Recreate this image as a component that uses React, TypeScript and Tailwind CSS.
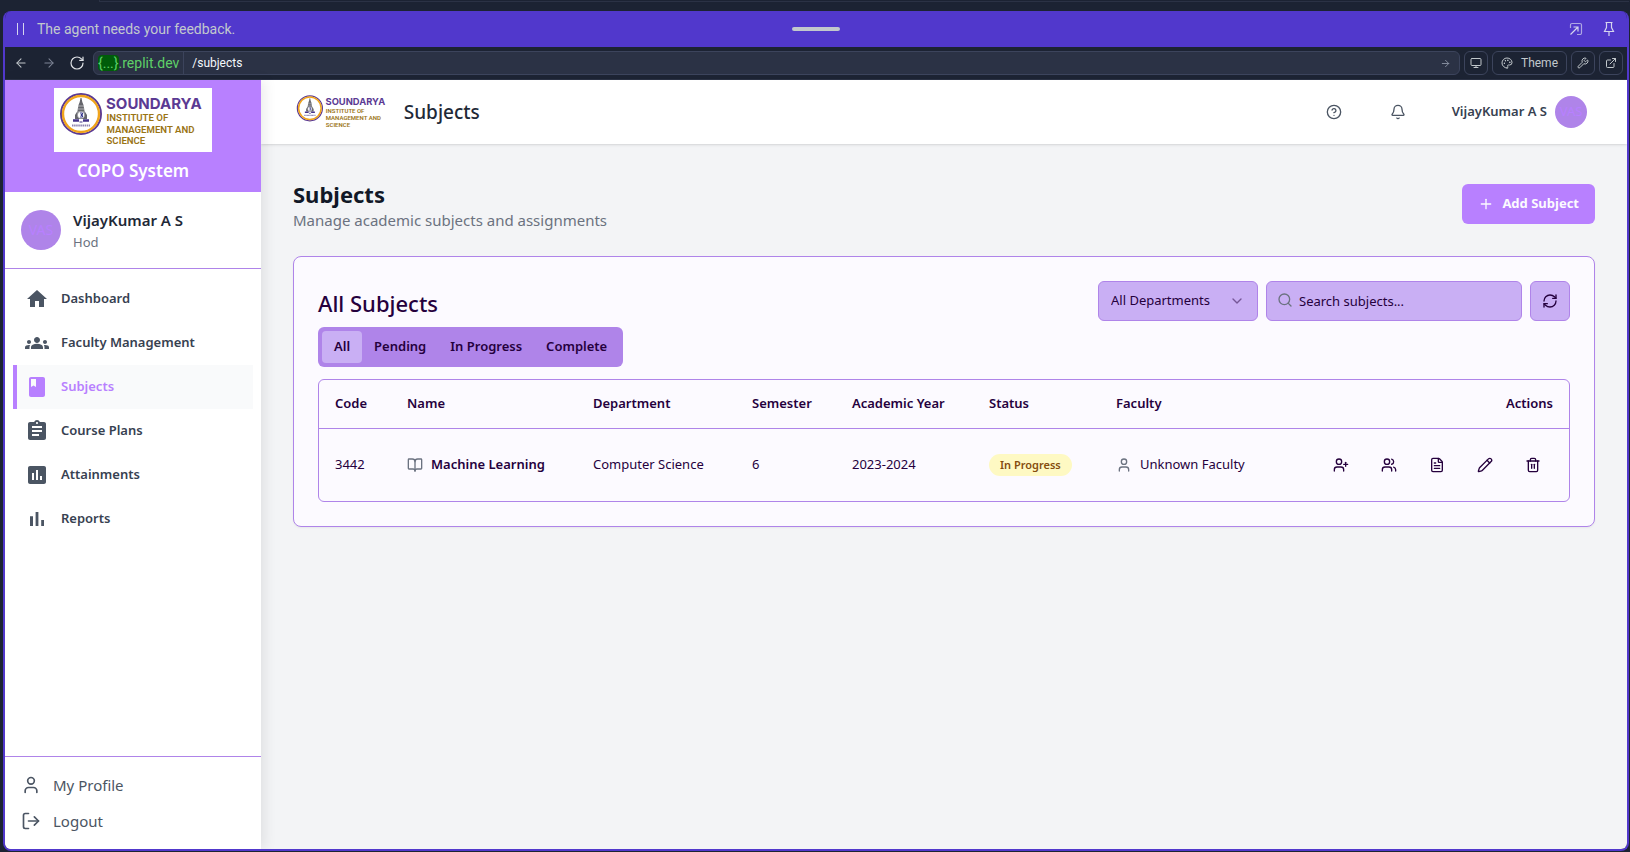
import React from "react";
import {
  ArrowLeft, ArrowRight, RotateCw, Monitor, Palette, Wrench, ExternalLink, CircleHelp, Bell, Plus,
  ChevronDown, Search, RefreshCw, BookOpen, User, UserPlus, Users, FileText, Pencil, Trash2, LogOut,
} from "lucide-react";
import { MdHome, MdGroups, MdBook, MdAssignment, MdAssessment } from "react-icons/md";

function Logo({ className }: { className: string }) {
  return (
    <svg viewBox="0 0 158 64" className={className} role="img" aria-label="Soundarya Institute of Management and Science">
      <rect width="158" height="64" fill="#fff" />
      <circle cx="27" cy="26" r="20" fill="#fff" stroke="#5b3a93" strokeWidth="2" />
      <circle cx="27" cy="26" r="18" fill="none" stroke="#f0a41c" strokeWidth="2.4" />
      <path d="M26.500 10h1l.8 4 1.200 3 1 6 2.500 4v4H21v-4l2.500-4 1-6 1.200-3z" fill="#66666c" />
      <path d="M24 18h6M23.500 21h7M23 24h8" stroke="#c9c9cc" strokeWidth=".8" />
      <circle cx="27" cy="27" r="3.600" fill="#fff" stroke="#8a8a90" strokeWidth=".6" />
      <path d="M26 25h2.500v1.500h-1.500v1h1.500V29H26" fill="none" stroke="#34348c" strokeWidth="1" />
      <path d="M19 32.500h6M29 32.500h6" stroke="#43328a" strokeWidth="2.400" />
      <path d="M25.500 34h3" stroke="#43328a" strokeWidth="1.200" />
      <path d="M18 37.500h18" stroke="#8d83b0" strokeWidth="2" strokeDasharray="1.500 .6" />
      <text x="52" y="21" fontSize="15" fill="#5b3a93" fontFamily="Inter, sans-serif" fontWeight="700">SOUNDARYA</text>
      <g fontFamily="Roboto, sans-serif" fontWeight="600" fontSize="9.600" fill="#9a7414">
        <text x="52.500" y="33">INSTITUTE OF</text>
        <text x="52.500" y="44.500">MANAGEMENT AND</text>
        <text x="52.500" y="56">SCIENCE</text>
      </g>
    </svg>
  );
}

function BarsIcon({ size, className }: { size: number; className?: string }) {
  return (
    <svg viewBox="0 0 24 24" width={size} height={size} fill="currentColor" className={className} aria-hidden="true">
      <path d="M5 9.200h3V19H5zM10.600 5h2.800v14h-2.800zM16.200 13H19v6h-2.800z" />
    </svg>
  );
}

const nav = [
  { label: "Dashboard", Icon: MdHome },
  { label: "Faculty Management", Icon: MdGroups },
  { label: "Subjects", Icon: MdBook, active: true },
  { label: "Course Plans", Icon: MdAssignment },
  { label: "Attainments", Icon: MdAssessment },
  { label: "Reports", Icon: BarsIcon },
];

const tabs = ["All", "Pending", "In Progress", "Complete"];

const columns = [
  { label: "Code", width: "w-[72px]" },
  { label: "Name", width: "w-[186px]" },
  { label: "Department", width: "w-[159px]" },
  { label: "Semester", width: "w-[100px]" },
  { label: "Academic Year", width: "w-[137px]" },
  { label: "Status", width: "w-[127px]" },
  { label: "Faculty", width: "w-[190px]" },
];

const actions = [
  { label: "Assign faculty", Icon: UserPlus },
  { label: "View students", Icon: Users },
  { label: "View syllabus", Icon: FileText },
  { label: "Edit subject", Icon: Pencil },
  { label: "Delete subject", Icon: Trash2 },
];

const toolButton = "flex h-6 items-center justify-center rounded-md border border-[#3c445c] text-[#c2c8cc]";

function BrowserChrome() {
  return (
    <>
      <div className="grid h-9 shrink-0 grid-cols-3 items-center bg-[#5138cc] px-3 font-['Roboto',sans-serif] text-[#c2c8cc]">
        <div className="flex items-center gap-2">
          <svg viewBox="0 0 12 14" className="h-3.5 w-3" fill="none" stroke="#d5d5ee" aria-hidden="true">
            <path d="M.5 1v12M6.500 1v12" />
          </svg>
          <span className="text-sm">The agent needs your feedback.</span>
        </div>
        <div className="h-1 w-12 justify-self-center rounded-full bg-[#c2c8cc]" />
        <div className="flex items-center justify-end gap-5">
          <button aria-label="Open in window">
            <svg viewBox="0 0 14 14" className="size-3.5" fill="none" stroke="#d5d5ee" strokeWidth="1.200" aria-hidden="true">
              <path d="M1.500 6V3a1.500 1.500 0 0 1 1.500-1.500h8A1.500 1.500 0 0 1 12.500 3v8a1.500 1.500 0 0 1-1.500 1.500H8" opacity=".7" />
              <path d="M1.500 12.500 9 5M4.500 5H9v4.500" />
            </svg>
          </button>
          <button aria-label="Pin">
            <svg viewBox="0 0 12 16" className="h-4 w-3" fill="none" stroke="#d5d5ee" strokeWidth="1.200" aria-hidden="true">
              <path d="M2.500 1.500h7M3.500 1.500v5l-2 4h9l-2-4v-5M6 10.500V15" />
            </svg>
          </button>
        </div>
      </div>
      <div className="flex h-[33px] shrink-0 items-center gap-1 border-b border-[#2b3245] bg-[#1c2333] px-1 font-['Roboto',sans-serif] text-[#c2c8cc]">
        <div className="flex items-center">
          <button aria-label="Back" className="grid h-6 w-6 place-items-center"><ArrowLeft size={14} strokeWidth={1.8} /></button>
          <button aria-label="Forward" className="grid h-6 w-8 place-items-center text-[#7f8697]"><ArrowRight size={14} strokeWidth={1.8} /></button>
          <button aria-label="Reload" className="grid h-6 w-6 place-items-center text-[#dfe2e6]"><RotateCw size={16} strokeWidth={1.8} /></button>
        </div>
        <div className="flex h-6 flex-1 items-center rounded-md border border-[#3c445c] bg-[#2b3245]">
          <div className="flex h-full items-center border-r border-[#3c445c] px-1 text-sm text-[#5fd068]">
            <span className="rounded bg-[#005c0a] leading-4">{"{...}"}</span>.replit.dev
          </div>
          <input aria-label="Path" defaultValue="/subjects" className="h-5 min-w-0 flex-1 bg-transparent px-2 text-xs text-[#f5f9fc] outline-none" />
          <button aria-label="Go" className="px-2 text-[#8b93a3]"><ArrowRight size={11} /></button>
        </div>
        <button aria-label="Device size" className={`${toolButton} w-6`}><Monitor size={12} /></button>
        <button className={`${toolButton} gap-2 px-2 text-xs`}>
          <Palette size={12} />Theme
        </button>
        <button aria-label="Developer tools" className={`${toolButton} w-6`}><Wrench size={12} /></button>
        <button aria-label="Open in new tab" className={`${toolButton} w-6`}><ExternalLink size={12} /></button>
      </div>
    </>
  );
}

function Sidebar() {
  return (
    <aside className="z-10 flex w-64 shrink-0 flex-col bg-white shadow-[4px_0_12px_rgba(0,0,0,0.08)]">
      <div className="flex h-28 flex-col items-center bg-[#b880ff] pt-2">
        <Logo className="h-16" />
        <p className="mt-1 text-[17px] leading-[30px] font-semibold text-white">COPO System</p>
      </div>
      <div className="flex h-[77px] items-center gap-3 border-b border-[#af84e9] px-4">
        <div className="grid size-10 shrink-0 place-items-center rounded-full bg-[#af84e9] text-sm text-[#b880ff]">VAS</div>
        <div>
          <p className="text-[15px] leading-6 font-semibold text-[#1f2937]">VijayKumar A S</p>
          <p className="text-[13px] leading-5 text-[#6b7280]">Hod</p>
        </div>
      </div>
      <nav className="flex-1 p-2">
        {nav.map(({ label, Icon, active }) => (
          <a
            key={label}
            href="#"
            className={
              active
                ? "flex h-11 items-center gap-3 border-l-4 border-[#b880ff] bg-[#f9fafb] px-2 text-[13px] font-semibold text-[#b880ff]"
                : "flex h-11 items-center gap-3 px-3 text-[13px] font-semibold text-[#374151]"
            }
          >
            <Icon size={24} className={active ? "shrink-0" : "shrink-0 text-[#4b5563]"} />
            {label}
          </a>
        ))}
      </nav>
      <div className="flex flex-col gap-2 border-t border-[#af84e9] px-4 py-3.5 text-[15px] text-[#4b5563]">
        <a href="#" className="flex h-7 items-center gap-3"><User size={20} />My Profile</a>
        <a href="#" className="flex h-7 items-center gap-3"><LogOut size={20} />Logout</a>
      </div>
    </aside>
  );
}

function SubjectsTable() {
  return (
    <div className="mt-3 overflow-hidden rounded-md border border-[#af84e9]">
      <table className="w-full table-fixed text-left text-[13px] text-[#25003d]">
        <thead>
          <tr className="h-12 border-b border-[#af84e9]">
            {columns.map((c) => (
              <th key={c.label} className={`${c.width} px-4 font-semibold`}>{c.label}</th>
            ))}
            <th className="px-4 text-right font-semibold">Actions</th>
          </tr>
        </thead>
        <tbody>
          <tr className="h-[73px] whitespace-nowrap">
            <td className="px-4">3442</td>
            <td className="px-4 font-semibold">
              <span className="flex items-center gap-2"><BookOpen size={16} className="text-[#6b7280]" />Machine Learning</span>
            </td>
            <td className="px-4">Computer Science</td>
            <td className="px-4">6</td>
            <td className="px-4">2023-2024</td>
            <td className="px-4">
              <span className="inline-flex h-[22px] items-center rounded-full bg-[#fef9c3] px-[11px] text-[11px] font-semibold text-[#854d0e]">In Progress</span>
            </td>
            <td className="px-4">
              <span className="flex items-center gap-2"><User size={16} className="text-[#6b7280]" />Unknown Faculty</span>
            </td>
            <td className="px-4">
              <div className="flex justify-end gap-2">
                {actions.map(({ label, Icon }) => (
                  <button key={label} aria-label={label} className="grid size-10 place-items-center"><Icon size={16} /></button>
                ))}
              </div>
            </td>
          </tr>
        </tbody>
      </table>
    </div>
  );
}

export default function App() {
  return (
    <div className="flex h-screen flex-col bg-[#1c2333] pr-px pb-px pl-[3px] font-['Noto_Sans','Open_Sans',sans-serif]">
      <div className="h-[11px] shrink-0">
        <div className="ml-24 h-0.5 border-b border-l border-[#2b3245]" />
      </div>
      <div className="flex min-h-0 flex-1 flex-col overflow-hidden rounded-lg border-x-2 border-b-2 border-[#5138cc]">
        <BrowserChrome />
        <div className="flex min-h-0 flex-1 bg-[#f3f4f6]">
          <Sidebar />
          <div className="flex min-w-0 flex-1 flex-col">
            <header className="flex h-16 shrink-0 items-center justify-between bg-white px-8 shadow-sm">
              <div className="flex items-center gap-3">
                <Logo className="h-10" />
                <p className="text-[19px] leading-8 font-medium text-[#1f2937]">Subjects</p>
              </div>
              <div className="flex items-center gap-6 pr-2">
                <button aria-label="Help" className="grid size-10 place-items-center text-[#4b5563]"><CircleHelp size={16} /></button>
                <button aria-label="Notifications" className="grid size-10 place-items-center text-[#4b5563]"><Bell size={16} /></button>
                <button className="ml-2.5 flex items-center gap-2 text-[13px] font-semibold text-[#374151]">
                  VijayKumar A S
                  <span className="grid size-8 place-items-center rounded-full bg-[#af84e9] font-normal text-[#b880ff]">VAS</span>
                </button>
              </div>
            </header>
            <main className="flex-1 overflow-hidden p-8">
              <div className="mb-6 flex items-center justify-between">
                <div>
                  <h1 className="pt-1 text-[22px] leading-7 font-bold text-[#111827]">Subjects</h1>
                  <p className="text-[15px] leading-6 text-[#6b7280]">Manage academic subjects and assignments</p>
                </div>
                <button className="flex h-10 items-center gap-2 rounded-md bg-[#b880ff] px-4 text-[13px] font-bold text-[#fcfaff]">
                  <Plus size={16} />Add Subject
                </button>
              </div>
              <section className="rounded-lg border border-[#af84e9] bg-[#fcfaff] p-6 text-[#25003d] shadow-xs">
                <div className="flex items-start justify-between">
                  <h2 className="pt-1 text-[22px] leading-9 font-medium">All Subjects</h2>
                  <div className="flex gap-2 text-[13px]">
                    <div className="relative h-10 w-40 rounded-md border border-[#af84e9] bg-[#c9aff4]">
                      <select aria-label="Department" className="size-full appearance-none bg-transparent px-3 outline-none"><option>All Departments</option></select>
                      <ChevronDown size={16} className="pointer-events-none absolute top-[11px] right-3 opacity-50" />
                    </div>
                    <div className="flex h-10 w-64 gap-1.5 rounded-md border border-[#af84e9] bg-[#c9aff4] px-2.5">
                      <Search size={16} className="mt-2.5 shrink-0 text-[#6b7280]" />
                      <input aria-label="Search subjects" placeholder="Search subjects..." className="h-full min-w-0 flex-1 bg-transparent outline-none placeholder:text-[#25003d]" />
                    </div>
                    <button aria-label="Refresh" className="grid size-10 place-items-center rounded-md border border-[#af84e9] bg-[#c9aff4]">
                      <RefreshCw size={16} />
                    </button>
                  </div>
                </div>
                <div role="tablist" className="mt-1.5 inline-flex h-10 items-center rounded-md bg-[#af84e9] p-1 align-top text-[13px] font-semibold">
                  {tabs.map((t, i) => (
                    <button key={t} role="tab" aria-selected={i === 0} className={i === 0 ? "h-8 rounded bg-[#c9aff4] px-3" : "h-8 px-3"}>{t}</button>
                  ))}
                </div>
                <SubjectsTable />
              </section>
            </main>
          </div>
        </div>
      </div>
    </div>
  );
}
